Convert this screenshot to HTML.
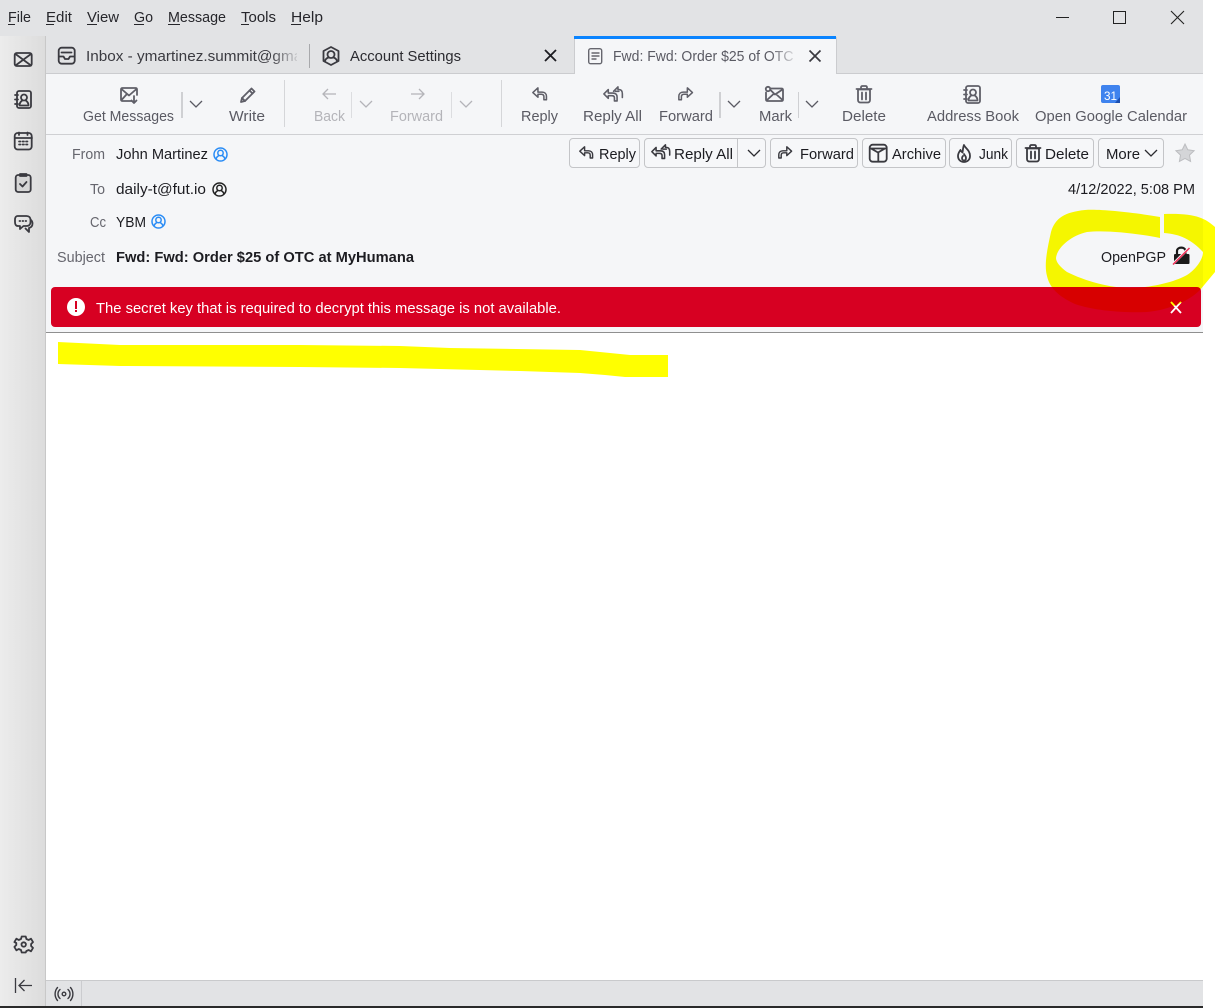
<!DOCTYPE html>
<html><head><meta charset="utf-8"><title>Thunderbird</title>
<style>
html,body{margin:0;padding:0;background:#fff;width:1215px;height:1008px;overflow:hidden}
svg{display:block;position:absolute;left:0;top:0}
text{font-family:"Liberation Sans",sans-serif;font-size:14.5px}
.m{fill:#26262b}.g{fill:#5a5a63}.d{fill:#b4b4b9}.k{fill:#1c1c21}.l{fill:#66666e}
.i{fill:none;stroke:#5f5f68;stroke-width:1.800;stroke-linejoin:round;stroke-linecap:round}
.s{fill:none;stroke:#3a3a40;stroke-width:1.800;stroke-linejoin:round;stroke-linecap:round}
.b{fill:#f6f7f9;stroke:#c4c5c8;stroke-width:1}
</style></head>
<body>
<svg width="1215" height="1008" viewBox="0 0 1215 1008" xmlns="http://www.w3.org/2000/svg">
<defs>
<linearGradient id="side" x1="0" x2="1" y1="0" y2="0"><stop offset="0" stop-color="#ececec"/><stop offset="1" stop-color="#dcdcdc"/></linearGradient>
<linearGradient id="f1" gradientUnits="userSpaceOnUse" x1="270" x2="298" y1="0" y2="0"><stop offset="0" stop-color="#3a3a40"/><stop offset="1" stop-color="#3a3a40" stop-opacity=".1"/></linearGradient>
<linearGradient id="f2" gradientUnits="userSpaceOnUse" x1="770" x2="797" y1="0" y2="0"><stop offset="0" stop-color="#5a5a63"/><stop offset="1" stop-color="#5a5a63" stop-opacity=".1"/></linearGradient>
<g id="reply"><path d="M7 1 1 6.500 7 12V8.500h4c2 0 3 1.200 3 3V15h3v-4c0-3-2-5-5-5H7z"/></g>
<g id="replyall"><path d="M6 4 1 9l5 5v-3h4c2 0 3 1 3 2.500V17h3v-4.500C16 9.500 14 8 11 8H6z"/><path d="M12 6 17 1v3h1c3 0 4 2 4 5v4"/><path d="M14 6h4"/></g>
<g id="forward"><path d="M11 1l6 5.500L11 12V8.500H7c-2 0-3 1.200-3 3V15H1v-4c0-3 2-5 5-5h5z"/></g>
<g id="trash"><path d="M3 4.500h12V15c0 1.500-1 2.500-2.500 2.500h-7C4 17.500 3 16.500 3 15z"/><path d="M1.500 4H16.500M6 4V2.500C6 1.500 6.500 1 7.500 1h3c1 0 1.500.5 1.500 1.500V4M7 7.500v7M11 7.500v7"/></g>
<g id="abook"><rect x="3" y="1" width="14" height="17" rx="2"/><path d="M1 5h3M1 9.500h3M1 14h3"/><circle cx="10" cy="7.500" r="3"/><path d="M5.500 15.500c0-3 2-4.500 2.700-5M14.500 15.500c0-3-2-4.500-2.700-5M5.500 15.500h9"/></g>
<g id="chev"><path d="M0 0l6 6 6-6"/></g>
<g id="person"><circle cx="7.500" cy="7.500" r="6.500"/><circle cx="7.500" cy="6" r="2.700"/><path d="M3 12c.5-2 2-3 2.800-3.500M12 12c-.5-2-2-3-2.800-3.500"/></g>
</defs>

<rect width="1203" height="1006" fill="#e2e3e5"/>
<rect y="1006" width="1203" height="2" fill="#2a2a2a"/>

<!-- Sidebar -->
<rect x="0" y="36" width="46" height="970" fill="url(#side)"/>
<rect x="45" y="36" width="1" height="970" fill="#c8c8c8"/>

<!-- main content -->
<rect x="46" y="74" width="1157" height="906" fill="#fff"/>
<rect x="46" y="74" width="1157" height="258" fill="#f5f6f8"/>
<rect x="46" y="73" width="528" height="1" fill="#cbcccf"/>
<rect x="836" y="73" width="367" height="1" fill="#cbcccf"/>
<rect x="46" y="134" width="1157" height="1" fill="#cfd0d3"/>
<rect x="46" y="332" width="1157" height="1" fill="#8f8f8f"/>

<!-- statusbar -->
<rect x="46" y="980" width="1157" height="26" fill="#e2e3e5"/>
<rect x="46" y="980" width="1157" height="1" fill="#c9cacc"/>
<rect x="81" y="981" width="1" height="25" fill="#cbcccf"/>
<g fill="none" stroke="#3a3a40" stroke-width="1.400" stroke-linecap="round">
<circle cx="64" cy="994" r="1.800"/>
<path d="M60 989.500a6 6 0 0 0 0 9M68 989.500a6 6 0 0 1 0 9M57.500 987.500a10 10 0 0 0 0 13M70.500 987.500a10 10 0 0 1 0 13"/>
</g>

<!-- Menu -->
<text x="8" y="22" textLength="23" lengthAdjust="spacingAndGlyphs" class="m">File</text>
<text x="46" y="22" textLength="26" lengthAdjust="spacingAndGlyphs" class="m">Edit</text>
<text x="87" y="22" textLength="32" lengthAdjust="spacingAndGlyphs" class="m">View</text>
<text x="134" y="22" textLength="19" lengthAdjust="spacingAndGlyphs" class="m">Go</text>
<text x="168" y="22" textLength="58" lengthAdjust="spacingAndGlyphs" class="m">Message</text>
<text x="241" y="22" textLength="35" lengthAdjust="spacingAndGlyphs" class="m">Tools</text>
<text x="291" y="22" textLength="32" lengthAdjust="spacingAndGlyphs" class="m">Help</text>
<g fill="#26262b">
<rect x="8" y="24" width="7" height="1"/><rect x="46" y="24" width="8" height="1"/><rect x="87" y="24" width="10" height="1"/><rect x="134" y="24" width="10" height="1"/><rect x="168" y="24" width="12" height="1"/><rect x="241" y="24" width="8" height="1"/><rect x="291" y="24" width="10" height="1"/>
</g>

<!-- window controls -->
<rect x="1056" y="17" width="13" height="1" fill="#222"/>
<rect x="1113.500" y="11.500" width="12" height="12" fill="none" stroke="#222"/>
<path d="M1171 11l13 13M1184 11l-13 13" stroke="#222" stroke-width="1.100" fill="none"/>

<!-- Tabs -->
<g class="s" transform="translate(58,47)"><rect x=".7" y=".7" width="16" height="16" rx="3"/><path d="M1 9.500h4.500l1.500 2.500h3.500l1.500-2.500H16M3.500 5.500h10"/></g>
<text x="86" y="61" textLength="223" lengthAdjust="spacingAndGlyphs" fill="url(#f1)">Inbox - ymartinez.summit@gmail</text>
<rect x="297" y="44" width="12" height="24" fill="#e2e3e5"/>
<rect x="309" y="44" width="1" height="24" fill="#a8a9ac"/>
<g class="s" transform="translate(322,46)"><path d="M9 1l7.500 4v10L9 19 1.500 15V5z"/><circle cx="9" cy="8.500" r="3.500"/><path d="M3 15c.5-2 2-3 3.500-3.500M15 15c-.5-2-2-3-3.500-3.500"/></g>
<text x="350" y="61" textLength="111" lengthAdjust="spacingAndGlyphs" fill="#2b2b30">Account Settings</text>
<path d="M545 50l11 11M556 50l-11 11" stroke="#1c1c21" stroke-width="1.800" fill="none"/>

<rect x="574" y="37" width="262" height="38" fill="#f5f6f8"/>
<rect x="574" y="37" width="1" height="37" fill="#cbcccf"/>
<rect x="836" y="37" width="1" height="37" fill="#cbcccf"/>
<rect x="574" y="36" width="262" height="3" fill="#0a84ff"/>
<g fill="none" stroke="#66666e" stroke-width="1.400" stroke-linejoin="round" transform="translate(588,48)"><rect x=".7" y=".7" width="13" height="15" rx="2"/><path d="M3.500 5h8M3.500 8h8M3.500 11h5"/></g>
<text x="613" y="61" textLength="196" lengthAdjust="spacingAndGlyphs" fill="url(#f2)">Fwd: Fwd: Order $25 of OTC at</text>
<rect x="797" y="44" width="14" height="24" fill="#f5f6f8"/>
<path d="M809.500 50.500l11 11M820.500 50.500l-11 11" stroke="#3a3a40" stroke-width="1.700" fill="none"/>

<!-- Sidebar icons -->
<g class="s" transform="translate(14,52)"><rect x=".7" y="1" width="17" height="13" rx="2"/><path d="M1.500 2l15.500 11.500M17 2 1.500 13.500"/></g>
<g class="s" transform="translate(14,90)"><use href="#abook"/></g>
<g class="s" transform="translate(14,132)"><rect x=".7" y="1" width="17" height="16.500" rx="3"/><path d="M1 6h17M5 .5v2.500M13.500 .5v2.500"/><path d="M5 9.500h1.500M8.500 9.500h1.500M12 9.500h1.500M5 12.500h1.500M8.500 12.500h1.500M12 12.500h1.500" stroke-width="1.700"/></g>
<g class="s" transform="translate(15,173)"><rect x=".7" y="2" width="15" height="17" rx="2.500" fill="#d6d6d6"/><path d="M5 3V1h6.500v2zM5 11l2.500 2.500L11.500 9"/></g>
<g class="s" transform="translate(14,215)"><path d="M3.500 1h9C15 1 16.500 2.500 16.500 5v2C16.500 9.500 15 11 12.500 11H9.500L6 14v-3H4C2 11 1 9.500 1 7V4.500C1 2.500 2 1 3.500 1z"/><path d="M17 5c1 1 1.500 2 1.500 3.500 0 3-1.500 4-3.500 4.500v4l-3.500-3.500"/><path d="M5.500 6h.7M8.500 6h.7M11.500 6h.7"/></g>
<g class="s" transform="translate(14,935)"><path d="M7.500 1h4l.7 2.500 2.300 1 2.300-1.300 2 3.400-1.900 1.900v2l1.900 1.900-2 3.400-2.300-1.300-2.300 1L11.500 17h-4l-.7-2.500-2.300-1-2.300 1.300-2-3.400 1.900-1.900v-2L.2 6.600l2-3.400 2.300 1.300 2.300-1z" transform="translate(.2,.5)"/><circle cx="9.700" cy="9.500" r="2.200"/></g>
<path d="M15.500 978v15M32 985.500H19M24.500 980l-5.500 5.500 5.500 5.500" fill="none" stroke="#3a3a40" stroke-width="1.300"/>

<!-- Toolbar -->
<rect x="284" y="80" width="1" height="47" fill="#d5d6d9"/>
<rect x="501" y="80" width="1" height="47" fill="#d5d6d9"/>
<rect x="181" y="92" width="2" height="26" fill="#cfd0d3"/>
<rect x="351" y="92" width="1" height="26" fill="#dcdde0"/>
<rect x="451" y="92" width="1" height="26" fill="#dcdde0"/>
<rect x="719" y="92" width="2" height="26" fill="#cfd0d3"/>
<rect x="798" y="92" width="1" height="26" fill="#cfd0d3"/>

<g class="i" transform="translate(120,87)"><path d="M12 14H2.500C1.500 14 1 13.500 1 12.500v-10C1 1.500 1.500 1 2.500 1h13c1 0 1.500.5 1.500 1.500V8M1.500 2 9 8.500 16.500 2M1.500 13l5-5.500"/><path d="M14 9v7M11.500 13.500 14 16l2.500-2.500"/></g>
<g class="i" transform="translate(240,87)"><path d="M1 15l1-4L11.500 1.500l3 3L5 14z"/><path d="M9.500 3.500l3 3M2 11l3 3"/></g>
<g fill="none" stroke="#b4b4b9" stroke-width="1.300"><path d="M336 94h-13M328 89l-5 5 5 5"/><path d="M411 94h13M419 89l5 5-5 5"/></g>
<use href="#chev" x="190" y="101" fill="none" stroke="#5a5a63" stroke-width="1.300"/>
<use href="#chev" x="360" y="101" fill="none" stroke="#b4b4b9" stroke-width="1.300"/>
<use href="#chev" x="460" y="101" fill="none" stroke="#b4b4b9" stroke-width="1.300"/>
<use href="#chev" x="728" y="101" fill="none" stroke="#5a5a63" stroke-width="1.300"/>
<use href="#chev" x="806" y="101" fill="none" stroke="#5a5a63" stroke-width="1.300"/>
<g class="i" transform="translate(532,87) scale(.85)"><use href="#reply"/></g>
<g class="i" transform="translate(603,86) scale(.88)"><use href="#replyall"/></g>
<g class="i" transform="translate(678,87) scale(.85)"><use href="#forward"/></g>
<g class="i" transform="translate(765,86)"><circle cx="3" cy="3" r="2.200"/><path d="M6 2.500h10.500c1 0 1.500.5 1.500 1.500v9.500c0 1-.5 1.500-1.500 1.500h-14C1.500 15 1 14.500 1 13.500V6.500M2 14l6-5.500M17.500 14l-6-5.500M6 4.500l4 4 7.500-5"/></g>
<g class="i" transform="translate(855,85)"><use href="#trash"/></g>
<g class="i" transform="translate(963,85)"><use href="#abook"/></g>
<rect x="1101" y="85" width="19" height="18" rx="2" fill="#3f83ee"/>
<path d="M1120 97l-5 6h5z" fill="#1c4fb0"/>
<text x="1104" y="100" style="font-size:12px" fill="#fff" textLength="13" lengthAdjust="spacingAndGlyphs">31</text>

<text x="83" y="121" textLength="91" lengthAdjust="spacingAndGlyphs" class="g">Get Messages</text>
<text x="229" y="121" textLength="36" lengthAdjust="spacingAndGlyphs" class="g">Write</text>
<text x="314" y="121" textLength="31" lengthAdjust="spacingAndGlyphs" class="d">Back</text>
<text x="390" y="121" textLength="53" lengthAdjust="spacingAndGlyphs" class="d">Forward</text>
<text x="521" y="121" textLength="37" lengthAdjust="spacingAndGlyphs" class="g">Reply</text>
<text x="583" y="121" textLength="59" lengthAdjust="spacingAndGlyphs" class="g">Reply All</text>
<text x="659" y="121" textLength="54" lengthAdjust="spacingAndGlyphs" class="g">Forward</text>
<text x="759" y="121" textLength="33" lengthAdjust="spacingAndGlyphs" class="g">Mark</text>
<text x="842" y="121" textLength="44" lengthAdjust="spacingAndGlyphs" class="g">Delete</text>
<text x="927" y="121" textLength="92" lengthAdjust="spacingAndGlyphs" class="g">Address Book</text>
<text x="1035" y="121" textLength="152" lengthAdjust="spacingAndGlyphs" class="g">Open Google Calendar</text>

<!-- Header buttons -->
<rect class="b" x="569.500" y="138.500" width="70" height="29" rx="3.500"/>
<rect class="b" x="644.500" y="138.500" width="121" height="29" rx="3.500"/>
<rect x="737" y="139" width="1" height="28" fill="#c4c5c8"/>
<rect class="b" x="770.500" y="138.500" width="87" height="29" rx="3.500"/>
<rect class="b" x="862.500" y="138.500" width="83" height="29" rx="3.500"/>
<rect class="b" x="949.500" y="138.500" width="62" height="29" rx="3.500"/>
<rect class="b" x="1016.500" y="138.500" width="77" height="29" rx="3.500"/>
<rect class="b" x="1098.500" y="138.500" width="65" height="29" rx="3.500"/>

<g class="s" transform="translate(579,146) scale(.8)"><use href="#reply"/></g>
<g class="s" transform="translate(651,144) scale(.85)"><use href="#replyall"/></g>
<g class="s" transform="translate(778,146) scale(.8)"><use href="#forward"/></g>
<g class="s" transform="translate(869,144)"><rect x=".7" y=".7" width="17" height="17" rx="3"/><path d="M1 4.500h16.500M2 4.500l7 4 7-4M9.300 8.500v9"/></g>
<g class="s" transform="translate(956,144)"><path d="M8 1c1 3 6 5 6 11 0 4-3 6-6 6s-6-2-6-6c0-3 1.500-4.500 2.500-6 .5 1.500 1 2 2 2.500C7 6 7 3 8 1z"/><path d="M8 10c.5 1.500 2 2 2 4s-1 2.500-2 2.500S6 15.500 6 14c0-1 .5-1.500 1-2"/></g>
<g class="s" transform="translate(1024,144)"><use href="#trash"/></g>
<use href="#chev" x="748" y="150" fill="none" stroke="#2b2b30" stroke-width="1.300"/>
<use href="#chev" x="1145" y="150" fill="none" stroke="#2b2b30" stroke-width="1.300"/>
<path d="M1185 144l2.800 5.800 6.300.9-4.600 4.400 1.100 6.300-5.600-3-5.600 3 1.100-6.300-4.600-4.400 6.300-.9z" fill="#d4d5d8" stroke="#bcbdc0" stroke-width="1"/>

<text x="599" y="159" textLength="37" lengthAdjust="spacingAndGlyphs" class="k">Reply</text>
<text x="674" y="159" textLength="59" lengthAdjust="spacingAndGlyphs" class="k">Reply All</text>
<text x="800" y="159" textLength="54" lengthAdjust="spacingAndGlyphs" class="k">Forward</text>
<text x="892" y="159" textLength="49" lengthAdjust="spacingAndGlyphs" class="k">Archive</text>
<text x="979" y="159" textLength="29" lengthAdjust="spacingAndGlyphs" class="k">Junk</text>
<text x="1045" y="159" textLength="44" lengthAdjust="spacingAndGlyphs" class="k">Delete</text>
<text x="1106" y="159" textLength="34" lengthAdjust="spacingAndGlyphs" class="k">More</text>

<!-- Header fields -->
<text x="72" y="159" textLength="33" lengthAdjust="spacingAndGlyphs" class="l">From</text>
<text x="90" y="194" textLength="15" lengthAdjust="spacingAndGlyphs" class="l">To</text>
<text x="90" y="227" textLength="16" lengthAdjust="spacingAndGlyphs" class="l">Cc</text>
<text x="57" y="262" textLength="48" lengthAdjust="spacingAndGlyphs" class="l">Subject</text>
<text x="116" y="159" textLength="92" lengthAdjust="spacingAndGlyphs" class="k">John Martinez</text>
<text x="116" y="194" textLength="90" lengthAdjust="spacingAndGlyphs" class="k">daily-t@fut.io</text>
<text x="116" y="227" textLength="30" lengthAdjust="spacingAndGlyphs" class="k">YBM</text>
<text x="116" y="262" textLength="298" lengthAdjust="spacingAndGlyphs" class="k" font-weight="bold">Fwd: Fwd: Order $25 of OTC at MyHumana</text>
<g fill="none" stroke="#2a8cf5" stroke-width="1.500" transform="translate(213,147)"><use href="#person"/></g>
<g fill="none" stroke="#222" stroke-width="1.500" transform="translate(212,182)"><use href="#person"/></g>
<g fill="none" stroke="#2a8cf5" stroke-width="1.500" transform="translate(151,214)"><use href="#person"/></g>
<text x="1068" y="194" textLength="127" lengthAdjust="spacingAndGlyphs" class="k">4/12/2022, 5:08 PM</text>
<text x="1101" y="262" textLength="65" lengthAdjust="spacingAndGlyphs" class="k">OpenPGP</text>
<path d="M1175 254h13.500c.5 0 1 .5 1 1v8c0 .5-.5 1-1 1H1175c-.5 0-1-.5-1-1v-8c0-.5.5-1 1-1z" fill="#1a1a1a"/>
<path d="M1177 254v-3c0-4.500 8.500-4.500 8.500 0v3" fill="none" stroke="#1a1a1a" stroke-width="2.200"/>
<path d="M1173 264l16-16" stroke="#f5f6f8" stroke-width="2.600"/>
<path d="M1173 264.500l16.500-16.500" stroke="#ef2d56" stroke-width="1.500"/>

<!-- Banner -->
<rect x="51" y="287" width="1150" height="40" rx="4" fill="#d70022"/>
<circle cx="76" cy="307" r="9" fill="#fff"/>
<rect x="75" y="301" width="2" height="8" fill="#d70022"/>
<rect x="75" y="310" width="2" height="2" fill="#d70022"/>
<text x="96" y="313" textLength="465" lengthAdjust="spacingAndGlyphs" fill="#fff">The secret key that is required to decrypt this message is not available.</text>
<path d="M1171 302l10 11M1181 302l-10 11" stroke="#fff" stroke-width="1.800" fill="none"/>

<!-- Yellow highlighter -->
<g style="mix-blend-mode:multiply" fill="#ffff00">
<path d="M1160 217C1130 212 1100 209 1085 210C1065 212 1055 218 1051 232C1047 250 1044 265 1047 276C1050 290 1062 298 1075 304C1095 311 1125 313 1147 312C1170 310 1190 300 1200 290L1215 272V227C1205 218 1195 213 1164 214V233C1180 234 1192 240 1203 252C1203 260 1195 270 1187 275C1175 282 1150 288 1130 288C1110 288 1085 281 1067 272C1060 267 1056 262 1056 258C1057 248 1070 236 1087 232C1105 230 1135 233 1160 238Z"/>
<polygon points="58,342 120,345 300,345 400,346 450,348 580,350 610,353 630,355 668,355 668,377 625,377 605,375 580,373 520,371 400,368 300,367 120,366 58,364"/>
</g>
</svg>
</body></html>
